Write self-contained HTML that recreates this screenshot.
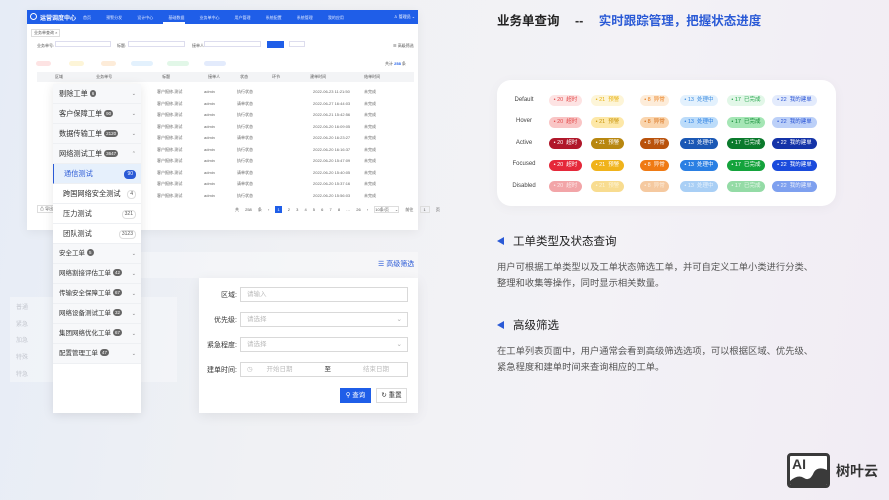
<!DOCTYPE html>
<html><head><meta charset="utf-8">
<style>
*{margin:0;padding:0;box-sizing:border-box}
body{width:889px;height:500px;overflow:hidden;position:relative;font-family:"Liberation Sans","Noto Sans CJK SC",sans-serif;background:linear-gradient(100deg,#e6ecf6 0%,#f0f1f4 35%,#f3f2f6 65%,#f1ecf4 100%);color:#333}
.a{position:absolute}
.t{font-size:4px;color:#555;white-space:nowrap}
.win{left:27px;top:10px;width:391px;height:220px;background:#fff;box-shadow:0 2px 10px rgba(0,0,0,.06)}
.nav{left:0;top:0;width:391px;height:14px;background:#1f5ee8}
.in{background:#fff;border:1px solid #dde;height:6px}
.menu{left:53px;top:84px;width:88px;height:329px;background:#fff;box-shadow:0 2px 10px rgba(0,0,0,.1)}
.mi{position:absolute;left:0;width:88px;height:20px;border-bottom:1px solid #eef0f3;background:#f7f8fa;font-size:7.2px;color:#333;padding-left:6px;line-height:20px}
.mi.s{background:#fff;padding-left:10px}
.mi .b{display:inline-block;background:#666;color:#fff;font-size:4.5px;border-radius:4px;padding:0 2px;line-height:7px;vertical-align:1px;margin-left:2px}
.mi .c{position:absolute;right:5px;top:0;font-size:5px;color:#777}
.mi .n{position:absolute;right:5px;top:6px;font-size:5px;color:#555;border:1px solid #ddd;border-radius:4px;line-height:7px;padding:0 2px}
.form{left:199px;top:278px;width:219px;height:135px;background:#fff;box-shadow:0 3px 12px rgba(0,0,0,.07)}
.lbl{font-size:7px;color:#333;text-align:right;width:38px;left:0}
.fi{left:41px;width:168px;height:15px;border:1px solid #d9d9d9;font-size:6.5px;color:#bbb;padding-left:6px;line-height:13px}
.card{left:497px;top:80px;width:339px;height:126px;background:#fff;border-radius:14px;box-shadow:0 2px 12px rgba(0,0,0,.04)}
.rl{font-size:6px;color:#444;width:60px;text-align:center;left:-3px}
.ch{height:11px;border-radius:6px;font-size:5.5px;line-height:11px;text-align:center;white-space:nowrap}
h3{position:absolute;font-size:11.5px;font-weight:normal;color:#222}
.p{position:absolute;font-size:9.3px;color:#555;line-height:16px;white-space:nowrap}
.tri{position:absolute;width:0;height:0;border-top:4px solid transparent;border-bottom:4px solid transparent;border-right:7px solid #2a5ad6}
</style></head><body>

<div class="a win">
 <div class="a nav">
  <div class="a" style="left:3px;top:3px;width:7px;height:7px;border:1.5px solid #fff;border-radius:50%"></div>
  <div class="a t" style="left:13px;top:3px;color:#fff;font-size:6px;font-weight:bold">运营调度中心</div>
  <div class="a t" style="left:56px;top:5px;color:#dfe8ff;word-spacing:14px">首页 预警分发 设计中心 基础数据 业务单中心 用户管理 系统配置 系统管理 我的应用</div>
  <div class="a" style="left:136px;top:12px;width:22px;height:1.5px;background:#fff"></div>
  <div class="a t" style="left:367px;top:4px;color:#fff">♙ 管理员 ⌄</div>
 </div>
 <div class="a t" style="left:4px;top:19px;border:1px solid #ddd;padding:0 2px">业务单查询 ×</div>
 <div class="a t" style="left:10px;top:33px">业务单号:</div><div class="a in" style="left:28px;top:31px;width:56px"></div>
 <div class="a t" style="left:90px;top:33px">标题:</div><div class="a in" style="left:101px;top:31px;width:57px"></div>
 <div class="a t" style="left:165px;top:33px">接单人:</div><div class="a in" style="left:177px;top:31px;width:57px"></div>
 <div class="a" style="left:240px;top:31px;width:17px;height:7px;background:#1f5ee8"></div>
 <div class="a in" style="left:262px;top:31px;width:16px"></div>
 <div class="a t" style="left:366px;top:33px">☰ 高级筛选</div>
 <div class="a" style="left:9px;top:51px;width:15px;height:5px;background:#fde3e3;border-radius:3px"></div>
 <div class="a" style="left:42px;top:51px;width:15px;height:5px;background:#fdf5d8;border-radius:3px"></div>
 <div class="a" style="left:74px;top:51px;width:15px;height:5px;background:#fdecd9;border-radius:3px"></div>
 <div class="a" style="left:104px;top:51px;width:22px;height:5px;background:#e3f1fd;border-radius:3px"></div>
 <div class="a" style="left:140px;top:51px;width:22px;height:5px;background:#e2f7e8;border-radius:3px"></div>
 <div class="a" style="left:177px;top:51px;width:22px;height:5px;background:#e3ebfc;border-radius:3px"></div>
 <div class="a t" style="left:358px;top:51px">共计 <b style="color:#1f5ee8">258</b> 条</div>
 <div class="a" style="left:10px;top:62px;width:377px;height:10px;background:#f3f4f6"></div>
 <div class="a t" style="left:28px;top:64px;word-spacing:4px">区域 <span style="margin-left:28px">业务单号</span><span style="margin-left:50px">标题</span><span style="margin-left:38px">接单人</span><span style="margin-left:20px">状态</span><span style="margin-left:24px">环节</span><span style="margin-left:30px">建单时间</span><span style="margin-left:38px">结单时间</span></div>
 <div class="a t" style="left:130px;top:76px;line-height:11.5px;color:#666">客户报修-测试<br>客户报修-测试<br>客户报修-测试<br>客户报修-测试<br>客户报修-测试<br>客户报修-测试<br>客户报修-测试<br>客户报修-测试<br>客户报修-测试<br>客户报修-测试</div>
 <div class="a t" style="left:177px;top:76px;line-height:11.5px;color:#666">admin<br>admin<br>admin<br>admin<br>admin<br>admin<br>admin<br>admin<br>admin<br>admin</div>
 <div class="a t" style="left:210px;top:76px;line-height:11.5px;color:#666">执行状态<br>请单状态<br>执行状态<br>执行状态<br>请单状态<br>执行状态<br>执行状态<br>请单状态<br>请单状态<br>执行状态</div>
 <div class="a t" style="left:286px;top:76px;line-height:11.5px;color:#666">2022-06-23 11:21:50<br>2022-06-27 16:44:03<br>2022-06-21 15:42:56<br>2022-06-20 16:09:05<br>2022-06-20 16:23:27<br>2022-06-20 16:16:37<br>2022-06-20 15:47:09<br>2022-06-20 15:40:05<br>2022-06-20 15:37:16<br>2022-06-20 15:56:03</div>
 <div class="a t" style="left:337px;top:76px;line-height:11.5px;color:#666">未完成<br>未完成<br>未完成<br>未完成<br>未完成<br>未完成<br>未完成<br>未完成<br>未完成<br>未完成</div>
 <div class="a t" style="left:10px;top:195px;border:1px solid #ddd;padding:0 2px">⚠ 导出</div>
 <div class="a t" style="left:208px;top:197px;word-spacing:5px">共 258 条 ‹ <span style="background:#1f5ee8;color:#fff;padding:1px 2px">1</span> 2 3 4 5 6 7 8 … 26 › <span style="border:1px solid #ddd">10条/页 ⌄</span> 前往 <span style="border:1px solid #ddd;padding:0 3px">1</span> 页</div>
</div>

<div class="a" style="left:10px;top:297px;width:167px;height:85px;background:rgba(255,255,255,.35)"></div>
<div class="a" style="left:16px;top:300px;font-size:6px;color:#c4c7cf;line-height:16.7px">普通<br>紧急<br>加急<br>特殊<br>特急</div>
<div class="a" style="left:140px;top:252px;width:278px;height:26px;background:rgba(255,255,255,.35)"></div>
<div class="a" style="left:378px;top:259px;font-size:7px;color:#2a5ad6">☰ 高级筛选</div>

<div class="a menu">
 <div class="mi" style="top:0">剔除工单<span class="b">6</span><span class="c">⌄</span></div>
 <div class="mi" style="top:20px">客户保障工单<span class="b">90</span><span class="c">⌄</span></div>
 <div class="mi" style="top:40px">数据传输工单<span class="b">2120</span><span class="c">⌄</span></div>
 <div class="mi" style="top:60px">网络测试工单<span class="b">3647</span><span class="c">⌃</span></div>
 <div class="mi s" style="top:80px;background:#e6f0fc;color:#2a5ad6;border-left:1.5px solid #2a5ad6">通信测试<span class="n" style="background:#2a5ad6;color:#fff;border-color:#2a5ad6">90</span></div>
 <div class="mi s" style="top:100px">跨国网络安全测试<span class="n">4</span></div>
 <div class="mi s" style="top:120px">压力测试<span class="n">321</span></div>
 <div class="mi s" style="top:140px">团队测试<span class="n">3123</span></div>
 <div class="mi" style="top:160px;font-size:6.5px">安全工单<span class="b">5</span><span class="c">⌄</span></div>
 <div class="mi" style="top:180px;font-size:6.5px">网络割接评估工单<span class="b">42</span><span class="c">⌄</span></div>
 <div class="mi" style="top:200px;font-size:6.5px">传输安全保障工单<span class="b">67</span><span class="c">⌄</span></div>
 <div class="mi" style="top:220px;font-size:6.5px">网络设备测试工单<span class="b">32</span><span class="c">⌄</span></div>
 <div class="mi" style="top:240px;font-size:6.5px">集团网络优化工单<span class="b">67</span><span class="c">⌄</span></div>
 <div class="mi" style="top:260px;font-size:6.5px">配置管理工单<span class="b">47</span><span class="c">⌄</span></div>
</div>

<div class="a form">
 <div class="a lbl" style="top:12px">区域:</div><div class="a fi" style="top:9px">请输入</div>
 <div class="a lbl" style="top:37px">优先级:</div><div class="a fi" style="top:34px">请选择<span style="position:absolute;right:5px;color:#aaa">⌄</span></div>
 <div class="a lbl" style="top:62px">紧急程度:</div><div class="a fi" style="top:59px">请选择<span style="position:absolute;right:5px;color:#aaa">⌄</span></div>
 <div class="a lbl" style="top:87px">建单时间:</div><div class="a fi" style="top:84px">◷ <span style="margin-left:12px">开始日期</span><span style="margin-left:32px;color:#333">至</span><span style="margin-left:32px">结束日期</span></div>
 <div class="a" style="left:141px;top:110px;width:31px;height:15px;background:#1f5ee8;color:#fff;font-size:6.5px;line-height:15px;text-align:center">⚲ 查询</div>
 <div class="a" style="left:177px;top:110px;width:31px;height:15px;border:1px solid #ddd;color:#333;font-size:6.5px;line-height:13px;text-align:center">↻ 重置</div>
</div>

<div class="a" style="left:497px;top:10px;font-size:12.5px;font-weight:bold;color:#222;white-space:nowrap">业务单查询 <span style="margin-left:12px;color:#333">--</span> <span style="margin-left:12px;color:#2a5ad6">实时跟踪管理，把握状态进度</span></div>

<div class="a card">
 <div class="a rl" style="top:17px">Default</div>
 <div class="a rl" style="top:38px">Hover</div>
 <div class="a rl" style="top:60px">Active</div>
 <div class="a rl" style="top:81px">Focused</div>
 <div class="a rl" style="top:103px">Disabled</div>
</div>
<div id="chips"></div>
<script>
var cols=[[549,33,'20','超时'],[591,33,'21','预警'],[640,29,'8','异常'],[680,38,'13','处理中'],[727,38,'17','已完成'],[772,45,'22','我的建单']];
var st=[
[['#fde3e3','#e34a4a'],['#fdf5d8','#e8b10e'],['#fdecd9','#e97a14'],['#e3f1fd','#3a8be0'],['#e2f7e8','#22a54a'],['#e3ebfc','#2b55d5']],
[['#f9c5c5','#e34a4a'],['#fde8a8','#c9950a'],['#fad5ae','#d66a10'],['#bcdcfa','#2a7fe3'],['#a5e6b5','#118a35'],['#bcd0f8','#2b55d5']],
[['#b0172a','#fff'],['#b88710','#fff'],['#b9520c','#fff'],['#1b58b5','#fff'],['#0a7a2c','#fff'],['#1433a8','#fff']],
[['#e5283a','#fff'],['#f0b31b','#fff'],['#ef7a14','#fff'],['#2a7fe3','#fff'],['#14a33c','#fff'],['#1a4bdc','#fff']],
[['#f2a5a8','#fde5e5'],['#f8dc90','#fdf3d4'],['#f5c9a0','#fdeedd'],['#a9cff5','#e6f2fd'],['#94dba6','#e7f8eb'],['#7ea0ef','#e8eefc']]];
var ys=[95,117,138,160,181],h='';
for(var r=0;r<5;r++)for(var c=0;c<6;c++){var k=cols[c],s=st[r][c];h+='<div class="a ch" style="left:'+k[0]+'px;top:'+ys[r]+'px;width:'+k[1]+'px;background:'+s[0]+';color:'+s[1]+'">• '+k[2]+'&nbsp; '+k[3]+'</div>';}
document.getElementById('chips').innerHTML=h;
</script>

<div class="tri" style="left:497px;top:237px"></div>
<h3 style="left:513px;top:233px">工单类型及状态查询</h3>
<div class="p" style="left:497px;top:259px">用户可根据工单类型以及工单状态筛选工单，并可自定义工单小类进行分类、<br>整理和收集等操作，同时显示相关数量。</div>
<div class="tri" style="left:497px;top:321px"></div>
<h3 style="left:513px;top:317px">高级筛选</h3>
<div class="p" style="left:497px;top:343px">在工单列表页面中，用户通常会看到高级筛选选项，可以根据区域、优先级、<br>紧急程度和建单时间来查询相应的工单。</div>

<div class="a" style="left:787px;top:453px;width:43px;height:35px;border:3px solid #3a3a3a;border-radius:4px;background:#fff;overflow:hidden">
 <div class="a" style="left:2px;top:0;font-size:14px;font-weight:bold;color:#3a3a3a;line-height:16px">AI</div>
 <svg class="a" style="left:0;top:8px" width="37" height="22" viewBox="0 0 37 22"><path d="M0 22 L0 17 Q8 10 14 14 Q20 18 24 8 Q28 2 37 6 L37 22 Z" fill="#3a3a3a"/></svg>
</div>
<div class="a" style="left:836px;top:461px;font-size:14px;color:#333;font-weight:bold">树叶云</div>
</body></html>
